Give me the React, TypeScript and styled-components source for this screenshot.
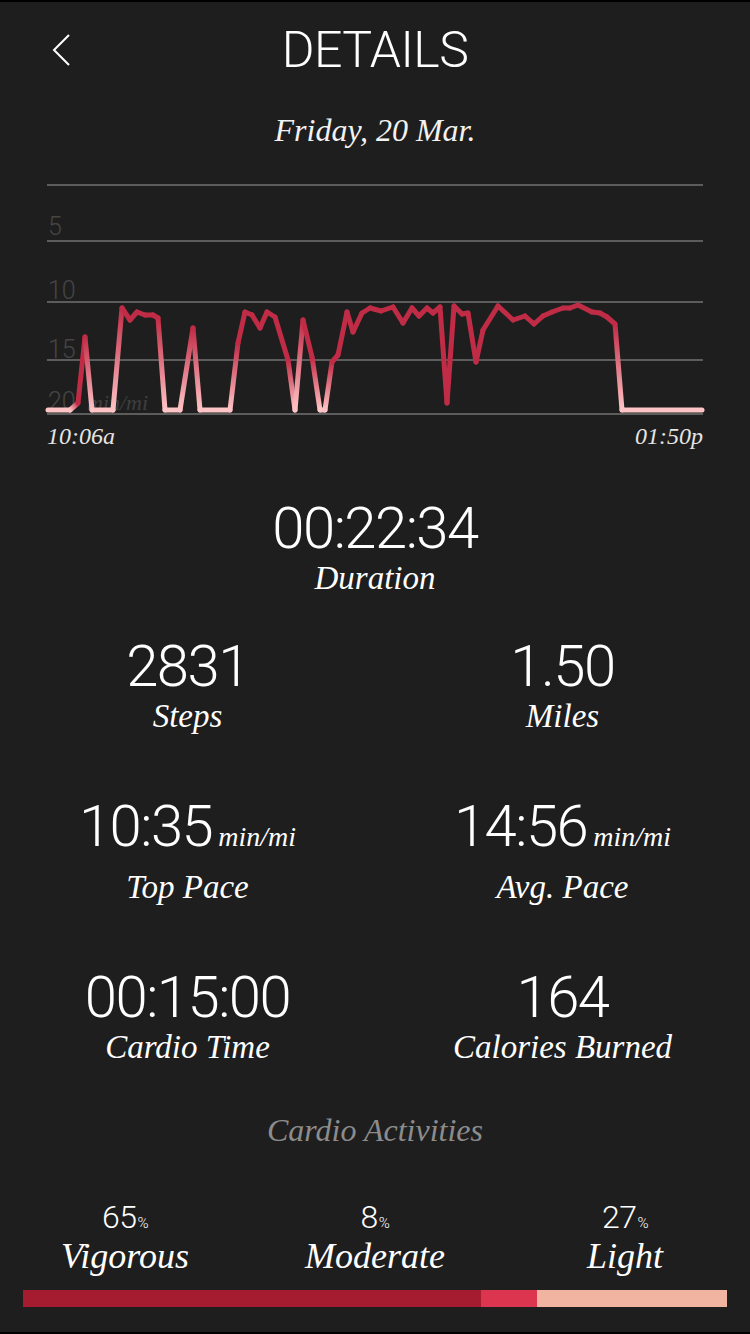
import React from "react";
import styled, { createGlobalStyle } from "styled-components";

const GlobalStyle = createGlobalStyle`
  html, body {
    margin: 0;
    padding: 0;
    background: #000;
  }
  * {
    box-sizing: border-box;
  }
`;

const CRIMSON = "#c02b45";
const PINK = "#ffc4c6";

// pace trace, in page pixels (x, y) as read off the chart
const TRACE: [number, number][] = [
  [48, 410], [70, 410], [78, 403], [85, 337], [92, 410], [113, 410],
  [122, 308], [130, 320], [137, 312], [145, 315], [153, 315], [158, 318],
  [165, 410], [180, 410], [193, 328], [200, 410], [230, 410], [238, 343],
  [245, 312], [252, 315], [260, 328], [267, 312], [275, 317], [288, 360],
  [295, 410], [303, 320], [312, 357], [320, 410], [325, 410], [332, 362],
  [338, 355], [347, 312], [353, 332], [362, 313], [370, 308], [381, 311],
  [393, 307], [403, 323], [412, 308], [419, 316], [427, 308], [433, 313],
  [440, 307], [447, 403], [454, 306], [462, 314], [468, 313], [476, 362],
  [483, 330], [498, 306], [513, 320], [525, 316], [534, 324], [543, 316],
  [552, 312], [563, 308], [570, 308], [578, 305], [592, 312], [600, 313],
  [607, 317], [615, 324], [622, 410], [702, 410],
];

const CHART_X = 47;
const CHART_Y = 184;
const CHART_W = 656;
const CHART_H = 232;
const GRID = [1, 57, 118, 176, 230];
const AXIS = [
  { label: "5", y: 51 },
  { label: "10", y: 115 },
  { label: "15", y: 174 },
  { label: "20", y: 226 },
];

const STATS = [
  [
    { value: "2831", label: "Steps" },
    { value: "1.50", label: "Miles" },
  ],
  [
    { value: "10:35", unit: "min/mi", label: "Top Pace" },
    { value: "14:56", unit: "min/mi", label: "Avg. Pace" },
  ],
  [
    { value: "00:15:00", label: "Cardio Time" },
    { value: "164", label: "Calories Burned" },
  ],
];

const ZONES = [
  { pct: 65, label: "Vigorous", color: "#a51c30" },
  { pct: 8, label: "Moderate", color: "#dc3550" },
  { pct: 27, label: "Light", color: "#f0b4a0" },
];

const PaceChart = () => {
  const pts = TRACE.map(([x, y]) => [x - CHART_X, y - CHART_Y]);
  const isBase = (y: number) => y >= 224;
  const segments = pts.slice(1).map((p, i) => ({ a: pts[i], b: p }));
  return (
    <ChartSvg width={CHART_W} height={CHART_H} viewBox={`0 0 ${CHART_W} ${CHART_H}`}>
      <defs>
        {segments.map(({ a, b }, i) => (
          <linearGradient
            key={i}
            id={`seg${i}`}
            gradientUnits="userSpaceOnUse"
            x1={a[0]}
            y1={a[1]}
            x2={b[0]}
            y2={b[1] + 0.01}
          >
            <stop offset="0" stopColor={isBase(a[1]) ? PINK : CRIMSON} />
            <stop offset="1" stopColor={isBase(b[1]) ? PINK : CRIMSON} />
          </linearGradient>
        ))}
      </defs>
      {GRID.map((y) => (
        <line key={y} x1={0} x2={CHART_W} y1={y} y2={y} stroke="#5c5c5c" strokeWidth={2} />
      ))}
      {AXIS.map((a) => (
        <AxisText key={a.label} x={1} y={a.y}>
          {a.label}
        </AxisText>
      ))}
      <UnitText x={40} y={226}>
        min/mi
      </UnitText>
      {segments.map(({ a, b }, i) => (
        <line
          key={i}
          x1={a[0]}
          y1={a[1]}
          x2={b[0]}
          y2={b[1]}
          stroke={`url(#seg${i})`}
          strokeWidth={5}
          strokeLinecap="round"
        />
      ))}
    </ChartSvg>
  );
};

const App = () => {
  return (
    <>
      <GlobalStyle />
      <Page>
        <Header>
          <BackButton aria-label="Back">
            <svg width="22" height="34" viewBox="0 0 22 34" fill="none">
              <polyline points="19,2 4,17 19,32" stroke="#fff" strokeWidth="2" />
            </svg>
          </BackButton>
          <Title>DETAILS</Title>
        </Header>
        <DateLine>Friday, 20 Mar.</DateLine>

        <ChartBox>
          <PaceChart />
          <TimeAxis>
            <span>10:06a</span>
            <span>01:50p</span>
          </TimeAxis>
        </ChartBox>

        <Duration>
          <Value>00:22:34</Value>
          <Label>Duration</Label>
        </Duration>

        <StatGrid>
          {STATS.map((row, r) => (
            <StatRow key={r}>
              {row.map((s) => (
                <Stat key={s.label}>
                  <Value>
                    {s.value}
                    {s.unit && <Unit>{s.unit}</Unit>}
                  </Value>
                  <Label>{s.label}</Label>
                </Stat>
              ))}
            </StatRow>
          ))}
        </StatGrid>

        <SectionTitle>Cardio Activities</SectionTitle>

        <Zones>
          {ZONES.map((z) => (
            <Zone key={z.label}>
              <Percent>
                {z.pct}
                <small>%</small>
              </Percent>
              <ZoneLabel>{z.label}</ZoneLabel>
            </Zone>
          ))}
        </Zones>
        <ZoneBar>
          {ZONES.map((z) => (
            <ZoneSegment key={z.label} $color={z.color} style={{ flexGrow: z.pct }} />
          ))}
        </ZoneBar>
      </Page>
    </>
  );
};

const Page = styled.div`
  width: 750px;
  height: 1334px;
  background: #1e1e1e;
  border-top: 2px solid #000;
  border-bottom: 2px solid #000;
  color: #fff;
  display: flex;
  flex-direction: column;
  overflow: hidden;
`;

const Header = styled.header`
  display: grid;
  grid-template-columns: 100px 1fr 100px;
  align-items: center;
  padding-top: 23px;
  height: 73px;
`;

const BackButton = styled.button`
  background: none;
  border: 0;
  padding: 0;
  margin-left: 50px;
  width: 22px;
  height: 34px;
  display: flex;
  cursor: pointer;
`;

const Title = styled.h1`
  margin: 0;
  font-family: Roboto, "Liberation Sans", sans-serif;
  font-weight: 300;
  font-size: 50px;
  line-height: 50px;
  letter-spacing: -0.5px;
  text-align: center;
`;

const serif = `"Liberation Serif", "DejaVu Serif", serif`;

const DateLine = styled.div`
  margin-top: 37px;
  font-family: ${serif};
  font-style: italic;
  font-size: 32px;
  line-height: 36px;
  text-align: center;
  color: #f2f2f2;
`;

const ChartBox = styled.section`
  margin: 36px 47px 0;
  display: flex;
  flex-direction: column;
`;

const ChartSvg = styled.svg`
  display: block;
  overflow: visible;
`;

const AxisText = styled.text`
  font-family: Roboto, "Liberation Sans", sans-serif;
  font-weight: 300;
  font-size: 25px;
  fill: #454545;
`;

const UnitText = styled.text`
  font-family: ${serif};
  font-style: italic;
  font-size: 22px;
  fill: #3e3e3e;
`;

const TimeAxis = styled.div`
  display: flex;
  justify-content: space-between;
  margin-top: 6px;
  font-family: ${serif};
  font-style: italic;
  font-size: 24px;
  line-height: 28px;
  color: #e4e4e4;
`;

const Duration = styled.div`
  margin-top: 49px;
  display: flex;
  flex-direction: column;
  align-items: center;
`;

const Value = styled.div`
  font-family: Roboto, "Liberation Sans", sans-serif;
  font-weight: 300;
  font-size: 58px;
  line-height: 58px;
  letter-spacing: -1.5px;
  white-space: nowrap;
`;

const Unit = styled.span`
  margin-left: 6px;
  font-family: ${serif};
  font-style: italic;
  font-size: 28px;
  letter-spacing: 0;
`;

const Label = styled.div`
  margin-top: 3px;
  font-family: ${serif};
  font-style: italic;
  font-size: 33px;
  line-height: 36px;
  white-space: nowrap;
`;

const StatGrid = styled.div`
  display: flex;
  flex-direction: column;
  margin-top: 41px;
  gap: 63px;
`;

const StatRow = styled.div`
  display: grid;
  grid-template-columns: 1fr 1fr;
`;

const Stat = styled.div`
  display: flex;
  flex-direction: column;
  align-items: center;
`;

const SectionTitle = styled.div`
  margin-top: 47px;
  font-family: ${serif};
  font-style: italic;
  font-size: 32px;
  line-height: 36px;
  text-align: center;
  color: #8c8c8c;
`;

const Zones = styled.div`
  display: grid;
  grid-template-columns: repeat(3, 1fr);
  margin-top: 53px;
`;

const Zone = styled.div`
  display: flex;
  flex-direction: column;
  align-items: center;
`;

const Percent = styled.div`
  font-family: Roboto, "Liberation Sans", sans-serif;
  font-weight: 300;
  font-size: 32px;
  line-height: 32px;
  letter-spacing: -0.5px;
  small {
    font-size: 15px;
    margin-left: 1px;
  }
`;

const ZoneLabel = styled.div`
  margin-top: -3px;
  font-family: ${serif};
  font-style: italic;
  font-size: 36px;
  line-height: 40px;
`;

const ZoneBar = styled.div`
  display: flex;
  height: 17px;
  margin: 14px 23px 0;
`;

const ZoneSegment = styled.div<{ $color: string }>`
  flex-basis: 0;
  background: ${({ $color }) => $color};
`;

export default App;
